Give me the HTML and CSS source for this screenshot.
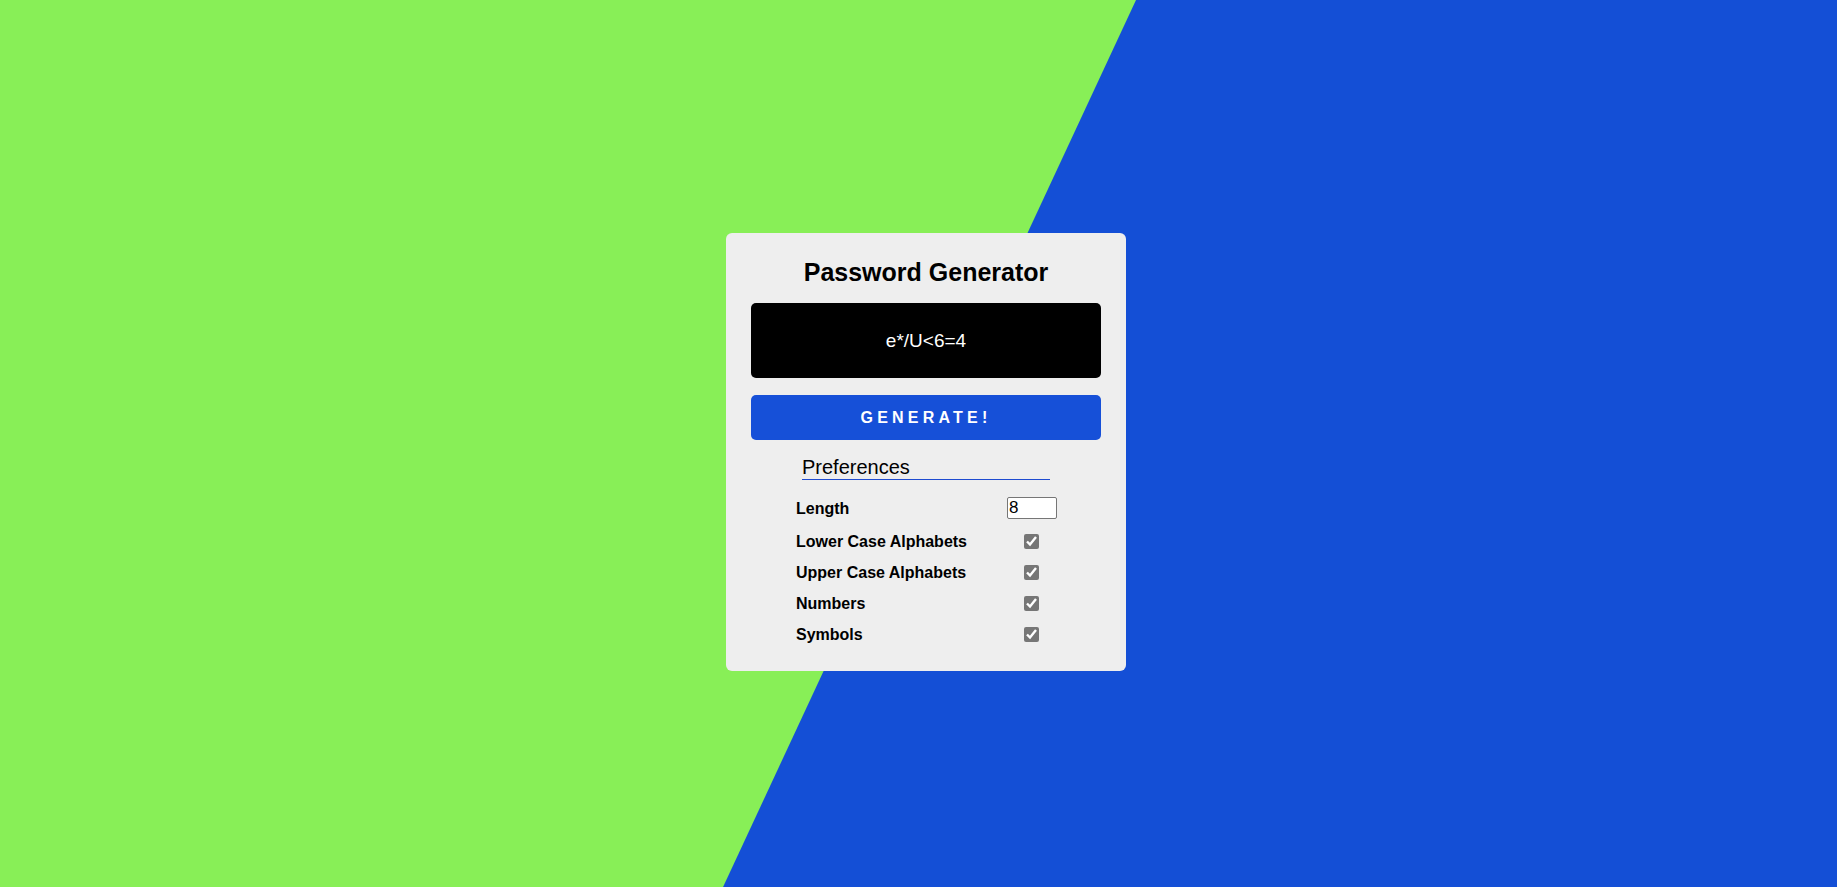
FILE: index.html
```html
<!DOCTYPE html>
<html lang="en">
<head>
<meta charset="utf-8">
<title>Password Generator</title>
<link rel="stylesheet" href="styles.css">
</head>
<body>
<div class="bg-split"></div>
<main class="page">
  <section class="card">
    <h1 class="title">Password Generator</h1>
    <div class="result">e*/U&lt;6=4</div>
    <button class="generate" type="button">GENERATE!</button>
    <h2 class="prefs-title">Preferences</h2>
    <div class="prefs">
      <label class="pref-label" for="len">Length</label>
      <div class="pref-control"><input id="len" class="len-input" type="number" value="8"></div>
      <label class="pref-label" for="lower">Lower Case Alphabets</label>
      <div class="pref-control"><input id="lower" class="check" type="checkbox" checked></div>
      <label class="pref-label" for="upper">Upper Case Alphabets</label>
      <div class="pref-control"><input id="upper" class="check" type="checkbox" checked></div>
      <label class="pref-label" for="num">Numbers</label>
      <div class="pref-control"><input id="num" class="check" type="checkbox" checked></div>
      <label class="pref-label" for="sym">Symbols</label>
      <div class="pref-control"><input id="sym" class="check" type="checkbox" checked></div>
    </div>
  </section>
</main>
</body>
</html>
```
FILE: styles.css
```css
* { box-sizing: border-box; }

html, body {
  margin: 0;
  height: 100%;
}

body {
  background: #88ef57;
  font-family: "Liberation Sans", Arial, sans-serif;
  overflow: hidden;
}

.bg-split {
  position: fixed;
  inset: 0;
  background: #144fd6;
  clip-path: polygon(61.84% 0, 100% 0, 100% 100%, 39.36% 100%);
}

.page {
  position: relative;
  min-height: 100vh;
  display: flex;
  align-items: center;
  justify-content: center;
  padding: 17px 0 0 15px;
}

.card {
  width: 400px;
  background: #eeeeee;
  border-radius: 6px;
  padding: 25px 25px 28px;
  display: flex;
  flex-direction: column;
  align-items: stretch;
}

.title {
  margin: 0;
  font-size: 25px;
  line-height: 28px;
  font-weight: bold;
  text-align: center;
  color: #000;
}

.result {
  margin-top: 17px;
  height: 75px;
  background: #000;
  color: #fff;
  border-radius: 5px;
  display: flex;
  align-items: center;
  justify-content: center;
  font-size: 19px;
}

.generate {
  margin-top: 17px;
  height: 45px;
  border: none;
  border-radius: 5px;
  background: #1650d8;
  color: #fff;
  font-family: "Liberation Sans", Arial, sans-serif;
  font-size: 16px;
  font-weight: bold;
  letter-spacing: 4.2px;
  padding: 0;
}

.prefs-title {
  margin: 16px auto 0;
  width: 248px;
  font-size: 20px;
  font-weight: normal;
  line-height: 22px;
  color: #000;
  border-bottom: 1px solid #1e4bd0;
  padding: 0 0 1px;
}

.prefs {
  margin: 17px auto 0;
  width: 260px;
  display: grid;
  grid-template-columns: 1fr 50px;
  row-gap: 14px;
  align-items: center;
}

.pref-label {
  font-size: 16px;
  font-weight: bold;
  line-height: 17px;
  color: #000;
}

.pref-control {
  display: flex;
  justify-content: center;
  align-items: center;
}

.len-input {
  width: 50px;
  height: 22px;
  margin: 0 0 0 2px;
  padding: 0 1px;
  border: 1px solid #767676;
  border-radius: 2px;
  background: #fff;
  font-family: "Liberation Sans", Arial, sans-serif;
  font-size: 17px;
  color: #000;
  -moz-appearance: textfield;
}

.len-input::-webkit-inner-spin-button,
.len-input::-webkit-outer-spin-button {
  -webkit-appearance: none;
  margin: 0;
}

.check {
  width: 15px;
  height: 15px;
  margin: 0;
  accent-color: #767676;
}
```
